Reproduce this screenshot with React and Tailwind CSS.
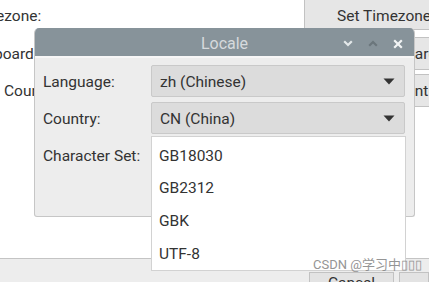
import React from "react";

function Caret() {
  return (
    <svg width="12" height="7" viewBox="0 0 12 7" className="shrink-0 mt-[1px]">
      <polygon points="0.5,0.5 11.5,0.5 6,6.5" fill="#333" />
    </svg>
  );
}

function Combo({ text }) {
  return (
    <div className="h-[32px] flex items-center justify-between bg-[#dcdcdc] border border-[#c9c9c9] rounded-[2px] pl-[8px] pr-[9px]">
      <span className="pt-[3px]">{text}</span>
      <Caret />
    </div>
  );
}

export default function App() {
  return (
    <div className="relative w-[429px] h-[282px] overflow-hidden bg-white font-['Roboto','Noto_Sans_CJK_SC',sans-serif] text-[15.5px] text-[#333] leading-none">
      {/* background window */}
      <div className="flex flex-col h-full">
        <div className="flex h-[30px] items-center">
          <div className="w-[308px] shrink-0 -ml-[4px] pt-[4px]">ezone:</div>
          <div className="flex-1 h-[31px] -mt-[1px] -mr-[40px] border border-[#c2c2c2] bg-[#e6e6e6] flex items-center pl-[32px] pt-[4px]">Set Timezone</div>
        </div>
        <div className="flex h-[33px] mt-[7px] items-center">
          <div className="w-[310px] shrink-0 -ml-[6px] pt-[3px]">board:</div>
          <div className="flex-1 h-full -mr-[40px] border border-[#c2c2c2] bg-[#e6e6e6] flex items-center pl-[41px] pt-[3px]">Set Keyboard</div>
        </div>
        <div className="flex h-[33px] mt-[4px] items-center">
          <div className="w-[304px] shrink-0 pl-[4px] pt-[3px]">Country:</div>
          <div className="flex-1 h-full -mr-[40px] border border-[#c2c2c2] bg-[#e6e6e6] flex items-center pl-[56px] pt-[3px]">Set Country</div>
        </div>
        <div className="flex-1" />
        <div className="h-[24px] border-t border-[#c4c4c4] bg-[#ededed] flex">
          <div className="w-[309px]" />
          <div className="mt-[13px] w-[85px] h-[30px] border border-[#c2c2c2] bg-[#e3e3e3] flex justify-center pt-[3px]">Cancel</div>
          <div className="ml-[5px] mt-[13px] flex-1 h-[30px] border border-[#c2c2c2] bg-[#e3e3e3]" />
        </div>
      </div>

      {/* Locale dialog */}
      <div className="absolute left-[34px] top-[28px] w-[381px] h-[189px] flex flex-col rounded-t-[5px] rounded-b-[3px] border border-[#c6c6c6] border-t-0 bg-[#ededed] overflow-hidden">
        <div className="h-[28px] bg-[#87939a] flex items-center relative shrink-0">
          <div className="flex-1 text-center text-[#d6dadd] text-[16px] pt-[4px]">Locale</div>
          <div className="absolute right-[11px] top-0 h-full flex items-center gap-[15px] pt-[3px]">
            <svg width="10" height="7" viewBox="0 0 10 7">
              <polyline points="1.2,1.2 5,5 8.8,1.2" fill="none" stroke="#e4e8ea" strokeWidth="2.2" />
            </svg>
            <svg width="10" height="7" viewBox="0 0 10 7">
              <polyline points="1.2,5.8 5,2 8.8,5.8" fill="none" stroke="#6b767c" strokeWidth="2.2" />
            </svg>
            <svg width="10" height="10" viewBox="0 0 10 10">
              <path d="M1.2 1.2 L8.8 8.8 M8.8 1.2 L1.2 8.8" fill="none" stroke="#f2f4f5" strokeWidth="2.2" />
            </svg>
          </div>
        </div>
        <div className="h-[2px] bg-[#f6f6f6] shrink-0" />
        <div className="grid grid-cols-[108px_1fr] gap-y-[5px] pl-[8px] pr-[9px] pt-[7px] items-center">
          <div className="pt-[3px]">Language:</div>
          <Combo text="zh (Chinese)" />
          <div className="pt-[3px]">Country:</div>
          <Combo text="CN (China)" />
          <div className="pt-[3px]">Character Set:</div>
          <Combo text="GB18030" />
        </div>
      </div>

      {/* dropdown list */}
      <div className="absolute left-[151px] top-[136px] w-[255px] h-[135px] bg-white border border-[#d2d2d2] flex flex-col py-[1px]">
        {["GB18030", "GB2312", "GBK", "UTF-8"].map((t) => (
          <div key={t} className="h-[33.5px] flex items-center pl-[7px] pt-[4px]">{t}</div>
        ))}
      </div>

      {/* watermark */}
      <div className="absolute left-[313px] top-[258px] text-[13px] text-[#8a8a8a] opacity-90">CSDN @学习中▯▯▯</div>
    </div>
  );
}
